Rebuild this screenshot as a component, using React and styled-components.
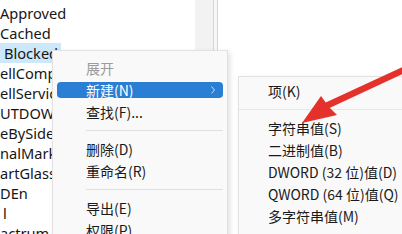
import React from "react";
import styled, { createGlobalStyle } from "styled-components";

const treeKeys = [
  { name: "Approved", shift: 0 },
  { name: "Cached", shift: 0 },
  { name: "Blocked", shift: 4, selected: true },
  { name: "ellCompatibility", shift: 0 },
  { name: "ellServiceObjects", shift: 0 },
  { name: "UTDOWN", shift: 0 },
  { name: "eBySideAssemblies", shift: 0 },
  { name: "nalMarker", shift: 0 },
  { name: "artGlass", shift: 0 },
  { name: "DEn", shift: 0 },
  { name: "l", shift: 3 },
  { name: "actrum", shift: 0 },
];

const GlobalStyle = createGlobalStyle`
  html, body {
    margin: 0;
    padding: 0;
    background: #ffffff;
  }
  body {
    width: 402px;
    height: 234px;
    overflow: hidden;
  }
`;

const App = () => {
  return (
    <>
      <GlobalStyle />
      <Window>
        <TreePane>
          {treeKeys.map((k) => (
            <TreeRow key={k.name} shift={k.shift} selected={k.selected}>
              {k.name}
            </TreeRow>
          ))}
        </TreePane>
        <ScrollGutter />
        <Splitter />
        <ValuesPane />

        <Menu>
          <MenuItem disabled>展开</MenuItem>
          <MenuItem active>
            新建(N)
            <Chevron viewBox="0 0 4 8">
              <path d="M0.5 0.5 L3.5 4 L0.5 7.5" fill="none" stroke="currentColor" strokeWidth="1" />
            </Chevron>
          </MenuItem>
          <MenuItem>查找(F)...</MenuItem>
          <Separator />
          <MenuItem>删除(D)</MenuItem>
          <MenuItem>重命名(R)</MenuItem>
          <Separator />
          <MenuItem>导出(E)</MenuItem>
          <MenuItem>权限(P)</MenuItem>
        </Menu>

        <SubMenu>
          <SubItem>项(K)</SubItem>
          <SubSeparator />
          <SubItem>字符串值(S)</SubItem>
          <SubItem>二进制值(B)</SubItem>
          <SubItem>DWORD (32 位)值(D)</SubItem>
          <SubItem>QWORD (64 位)值(Q)</SubItem>
          <SubItem>多字符串值(M)</SubItem>
        </SubMenu>

        <Arrow viewBox="0 0 402 234">
          <line x1="408" y1="68" x2="326" y2="106" stroke="#e4312b" strokeWidth="6.5" />
          <polygon points="302,123 321,96 329,107 337,115" fill="#e4312b" />
        </Arrow>
      </Window>
    </>
  );
};

export default App;

// Styled Components
const Window = styled.div`
  position: relative;
  width: 402px;
  height: 234px;
  overflow: hidden;
  display: flex;
  background: #ffffff;
`;

const TreePane = styled.div`
  width: 195px;
  flex: none;
  padding-top: 3px;
  display: flex;
  flex-direction: column;
  align-items: flex-start;
  overflow: hidden;
  font-family: "Noto Sans", "Segoe UI", sans-serif;
  font-size: 14.6px;
  color: #161616;
`;

const TreeRow = styled.div`
  flex: none;
  height: 20px;
  line-height: 20px;
  padding-left: ${(p) => p.shift}px;
  padding-right: ${(p) => (p.selected ? "3px" : "0")};
  white-space: nowrap;
  background: ${(p) => (p.selected ? "#cde8fb" : "transparent")};
`;

const ScrollGutter = styled.div`
  width: 18px;
  flex: none;
  background: #f2f2f2;
`;

const Splitter = styled.div`
  width: 3px;
  flex: none;
  border-left: 1px solid #d6d6d6;
  border-right: 1px solid #d6d6d6;
  background: #f7f7f7;
`;

const ValuesPane = styled.div`
  flex: 1;
  background: #ffffff;
`;

const menuBase = `
  position: absolute;
  display: flex;
  flex-direction: column;
  background: #f9f9f9;
  border: 1px solid #e2e2e2;
  box-shadow: 2px 2px 5px rgba(0, 0, 0, 0.12);
  font-family: "Noto Sans CJK SC", "Microsoft YaHei", sans-serif;
  font-size: 14px;
  color: #1a1a1a;
`;

const Menu = styled.div`
  ${menuBase}
  left: 52px;
  top: 50px;
  width: 174px;
  height: 200px;
  padding-top: 6px;
  z-index: 2;
`;

const MenuItem = styled.div`
  flex: none;
  height: 16px;
  line-height: 16px;
  margin: 3px 4px;
  padding: 0 8px 0 29px;
  border-radius: 4px;
  display: flex;
  align-items: center;
  justify-content: space-between;
  white-space: nowrap;
  background: ${(p) => (p.active ? "#2a7ed3" : "transparent")};
  color: ${(p) => (p.active ? "#ffffff" : p.disabled ? "#9b9b9b" : "#1a1a1a")};
`;

const Chevron = styled.svg`
  width: 4px;
  height: 8px;
  color: #c9def3;
`;

const Separator = styled.div`
  flex: none;
  height: 1px;
  margin: 7px 4px 7px 33px;
  background: #e1e1e1;
`;

const SubMenu = styled.div`
  ${menuBase}
  left: 238px;
  top: 76px;
  width: 200px;
  height: 180px;
  padding-top: 3px;
  z-index: 3;
`;

const SubItem = styled.div`
  flex: none;
  height: 16px;
  line-height: 16px;
  margin: 3px 4px;
  padding-left: 25px;
  white-space: nowrap;
`;

const SubSeparator = styled.div`
  flex: none;
  height: 1px;
  margin: 7px 0;
  background: #e6e6e6;
`;

const Arrow = styled.svg`
  position: absolute;
  left: 0;
  top: 0;
  width: 402px;
  height: 234px;
  pointer-events: none;
  z-index: 4;
`;
